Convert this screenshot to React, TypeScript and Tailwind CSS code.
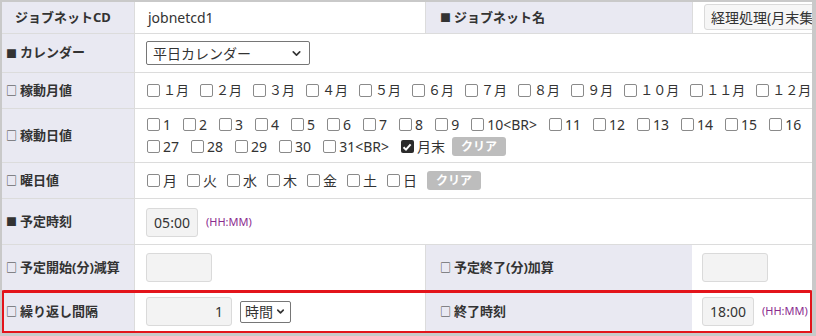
import { ChevronDown } from 'lucide-react'
import type { ReactNode } from 'react'

const FONT = { fontFamily: '"Noto Sans", "Noto Sans CJK JP", sans-serif' }
const CJK = { fontFamily: '"Noto Sans CJK JP", sans-serif' }

const MONTHS = ['１月', '２月', '３月', '４月', '５月', '６月', '７月', '８月', '９月', '１０月', '１１月', '１２月']
const DAYS_1 = ['1', '2', '3', '4', '5', '6', '7', '8', '9', '10<BR>', '11', '12', '13', '14', '15', '16', '17', '18', '19', '20<BR>', '21']
const DAYS_2 = ['27', '28', '29', '30', '31<BR>']
const WEEK = ['月', '火', '水', '木', '金', '土', '日']

function Box({ checked = false }: { checked?: boolean }) {
  return checked ? (
    <span className="inline-flex w-[13px] h-[13px] shrink-0 items-center justify-center rounded-[2px] bg-[#2b2b2b]">
      <svg width="10" height="10" viewBox="0 0 10 10">
        <path d="M1.5 5.2 L4 7.6 L8.6 2.4" fill="none" stroke="#fff" strokeWidth="2" />
      </svg>
    </span>
  ) : (
    <span className="inline-block w-[13px] h-[13px] shrink-0 rounded-[2px] border border-[#8a8a8a] bg-white" />
  )
}

function Check({ label, gap, checked }: { label: string; gap: string; checked?: boolean }) {
  return (
    <span className={`inline-flex items-center gap-[3px] ${gap}`}>
      <Box checked={checked} />
      <span>{label}</span>
    </span>
  )
}

function Clear() {
  return (
    <span className="inline-flex h-[19px] items-center rounded-[3px] bg-[#bdbdbd] px-[9px] text-[12px] font-bold text-white">
      クリア
    </span>
  )
}

function Label({ mark, children, wide }: { mark?: '■' | '□'; children: ReactNode; wide?: boolean }) {
  return (
    <div
      className={`flex shrink-0 items-center bg-[#e9e9f2] text-[13px] font-bold text-[#333] ${
        wide ? 'w-[267px] pl-[14px] border-l border-[#dcdcdc]' : 'w-[133px] pl-[4px] border-r border-[#dcdcdc]'
      }`}
    >
      {mark && (
        <span className="mr-[3px] text-[11px] font-normal" style={CJK}>
          {mark}
        </span>
      )}
      {children}
    </div>
  )
}

function Row({ h, children, mark }: { h: string; children: ReactNode; mark?: boolean }) {
  return (
    <div
      className={`flex ${h} border-b border-[#dcdcdc] ${
        mark ? 'outline outline-[3px] outline-[#e3141b] -outline-offset-[2px] rounded-[2px]' : ''
      }`}
    >
      {children}
    </div>
  )
}

function Input({ w, value, align = 'center' }: { w: string; value?: string; align?: 'center' | 'right' }) {
  return (
    <span
      className={`inline-flex ${w} h-[29px] items-center rounded-[3px] border border-[#dadada] bg-[#f3f3f3] px-[8px] text-[14px] ${
        align === 'right' ? 'justify-end' : 'justify-center'
      }`}
    >
      {value}
    </span>
  )
}

function Hint() {
  return <span className="ml-[8px] text-[11px] text-[#8b2c8f]">(HH:MM)</span>
}

export default function App() {
  return (
    <div className="w-[816px] h-[336px] overflow-hidden bg-[#c9c9c9] pt-[2px] pl-[2px] pr-[4px] pb-[3px] text-[14px] text-[#333]" style={FONT}>
      <div className="h-full overflow-hidden bg-white">
        <Row h="h-[32px]">
          <Label>
            <span className="pl-[9px]">ジョブネットCD</span>
          </Label>
          <div className="flex w-[290px] shrink-0 items-center pl-[13px]">jobnetcd1</div>
          <Label mark="■" wide>
            ジョブネット名
          </Label>
          <div className="flex flex-1 items-start border-l border-[#dcdcdc] pl-[11px] pt-[2px]">
            <span className="inline-flex h-[26px] w-[200px] shrink-0 items-center whitespace-nowrap rounded-[3px] border border-[#dadada] bg-[#f6f6f6] pl-[6px]">
              経理処理(月末集計)
            </span>
          </div>
        </Row>

        <Row h="h-[39px]">
          <Label mark="■">カレンダー</Label>
          <div className="flex flex-1 items-center pl-[11px]">
            <span className="inline-flex h-[24px] w-[164px] items-center justify-between rounded-[2px] border border-[#767676] bg-white pl-[6px] pr-[6px]">
              平日カレンダー
              <ChevronDown size={13} strokeWidth={3} />
            </span>
          </div>
        </Row>

        <Row h="h-[36px]">
          <Label mark="□">稼動月値</Label>
          <div className="flex flex-1 items-center whitespace-nowrap pl-[12px] text-[13px]">
            {MONTHS.map((m) => (
              <Check key={m} label={m} gap="mr-[11px]" />
            ))}
          </div>
        </Row>

        <Row h="h-[54px]">
          <Label mark="□">稼動日値</Label>
          <div className="flex flex-1 flex-col justify-center gap-[2px] overflow-hidden whitespace-nowrap pl-[12px] leading-[20px]">
            <div className="flex items-center">
              {DAYS_1.map((d) => (
                <Check key={d} label={d} gap="mr-[12px]" />
              ))}
            </div>
            <div className="flex items-center">
              {DAYS_2.map((d) => (
                <Check key={d} label={d} gap="mr-[12px]" />
              ))}
              <Check label="月末" gap="mr-[7px]" checked />
              <Clear />
            </div>
          </div>
        </Row>

        <Row h="h-[36px]">
          <Label mark="□">曜日値</Label>
          <div className="flex flex-1 items-center pl-[12px]">
            {WEEK.map((w) => (
              <Check key={w} label={w} gap="mr-[10px]" />
            ))}
            <Clear />
          </div>
        </Row>

        <Row h="h-[46px]">
          <Label mark="■">予定時刻</Label>
          <div className="flex flex-1 items-center pl-[11px] pt-[2px]">
            <Input w="w-[52px]" value="05:00" />
            <Hint />
          </div>
        </Row>

        <Row h="h-[46px]">
          <Label mark="□">予定開始(分)減算</Label>
          <div className="flex w-[290px] shrink-0 items-center pl-[11px]">
            <Input w="w-[66px]" />
          </div>
          <Label mark="□" wide>
            予定終了(分)加算
          </Label>
          <div className="flex flex-1 items-center pl-[10px]">
            <Input w="w-[66px]" />
          </div>
        </Row>

        <Row h="h-[42px]" mark>
          <Label mark="□">繰り返し間隔</Label>
          <div className="flex w-[290px] shrink-0 items-center gap-[8px] pl-[11px]">
            <Input w="w-[86px]" value="1" align="right" />
            <span className="inline-flex h-[22px] items-center gap-[2px] rounded-[2px] border border-[#767676] bg-white px-[4px]">
              時間
              <ChevronDown size={11} strokeWidth={3.5} />
            </span>
          </div>
          <Label mark="□" wide>
            終了時刻
          </Label>
          <div className="flex flex-1 items-center pl-[10px]">
            <Input w="w-[52px]" value="18:00" />
            <Hint />
          </div>
        </Row>
      </div>
    </div>
  )
}
